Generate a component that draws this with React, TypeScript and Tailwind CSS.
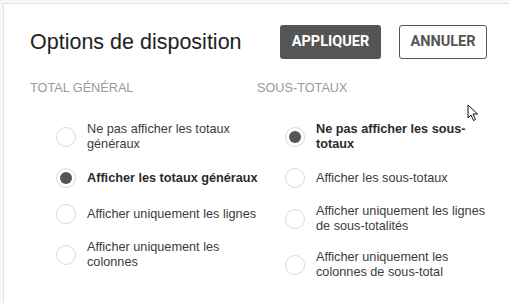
import { useState } from 'react';

const totalOptions = [
  'Ne pas afficher les totaux généraux',
  'Afficher les totaux généraux',
  'Afficher uniquement les lignes',
  'Afficher uniquement les colonnes',
];

const subOptions = [
  'Ne pas afficher les sous-totaux',
  'Afficher les sous-totaux',
  'Afficher uniquement les lignes de sous-totalités',
  'Afficher uniquement les colonnes de sous-total',
];

function RadioRow({ label, checked, onClick }: { label: string; checked: boolean; onClick: () => void }) {
  return (
    <button onClick={onClick} className="flex items-center gap-[11px] text-left">
      <span className="w-5 h-5 shrink-0 rounded-full border border-[#dadada] bg-white flex items-center justify-center">
        {checked && <span className="w-3 h-3 rounded-full bg-[#555555]" />}
      </span>
      <span
        className={`w-[178px] shrink-0 text-[12.7px] leading-[15px] ${
          checked ? 'font-bold text-[#2a2a2a]' : 'text-[#3c3c3c]'
        }`}
      >
        {label}
      </span>
    </button>
  );
}

function OptionColumn({
  title,
  options,
  selected,
  onSelect,
  indent,
}: {
  title: string;
  options: string[];
  selected: number;
  onSelect: (i: number) => void;
  indent: string;
}) {
  return (
    <div className="w-[227px] shrink-0">
      <p className="text-[12.7px] leading-4 text-[#9a9a9a] uppercase">{title}</p>
      <div className={`mt-[26px] flex flex-col gap-[16px] ${indent}`}>
        {options.map((opt, i) => (
          <RadioRow key={opt} label={opt} checked={selected === i} onClick={() => onSelect(i)} />
        ))}
      </div>
    </div>
  );
}

export default function App() {
  const [total, setTotal] = useState(1);
  const [sub, setSub] = useState(0);

  return (
    <div
      className="relative w-[509px] h-[303px] overflow-hidden bg-[#f7f7f7] pt-[3px] pl-[3px]"
      style={{ fontFamily: '"Liberation Sans", Arial, sans-serif' }}
    >
      <div className="h-full bg-white border-t border-l border-[#e3e3e3] pl-[26px] pr-[22px]">
        {/* Header */}
        <div className="flex items-center pt-[21px]">
          <h1 className="text-[21.5px] leading-6 text-[#222222]">Options de disposition</h1>
          <div className="ml-auto flex items-center gap-[18px]">
            <button
              className="h-[34px] w-[101px] rounded-[3px] bg-[#555555] text-white text-[14.5px] font-bold"
              style={{ fontFamily: 'Roboto, "Liberation Sans", sans-serif' }}
            >
              APPLIQUER
            </button>
            <button
              className="h-[34px] w-[88px] rounded-[3px] border border-[#555555] bg-white text-[#555555] text-[14.5px] font-bold"
              style={{ fontFamily: 'Roboto, "Liberation Sans", sans-serif' }}
            >
              ANNULER
            </button>
          </div>
        </div>

        {/* Columns */}
        <div className="flex mt-[21px]">
          <OptionColumn title="Total général" options={totalOptions} selected={total} onSelect={setTotal} indent="pl-[26px]" />
          <OptionColumn title="Sous-totaux" options={subOptions} selected={sub} onSelect={setSub} indent="pl-[28px]" />
        </div>
      </div>

      {/* mouse pointer */}
      <svg className="absolute left-[467px] top-[104px]" width="12" height="18" viewBox="0 0 12 18">
        <path d="M1 1 L1 14 L4 11 L6.5 16.5 L8.5 15.5 L6 10 L10.5 10 Z" fill="white" stroke="#111" strokeWidth="1" strokeLinejoin="round" />
      </svg>
    </div>
  );
}
